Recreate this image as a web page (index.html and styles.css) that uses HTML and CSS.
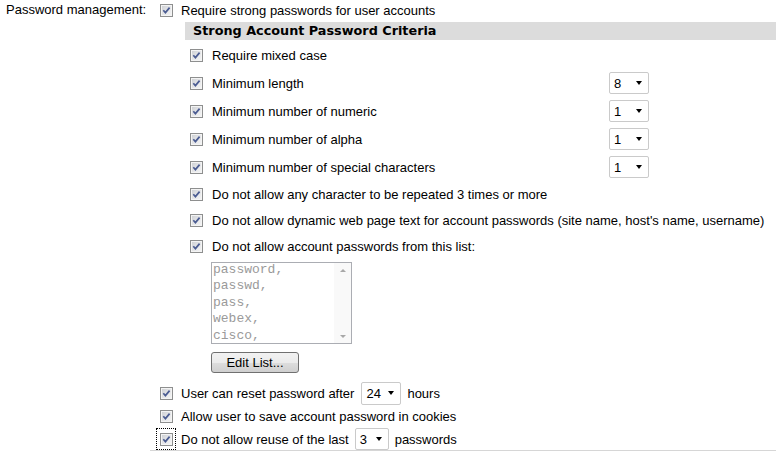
FILE: index.html
```html
<!DOCTYPE html>
<html>
<head>
<meta charset="utf-8">
<link rel="stylesheet" href="styles.css">
</head>
<body>
<div class="page">
  <div class="label">Password management:</div>
  <div class="content">
    <div class="row top">
      <span class="cb"><svg viewBox="0 0 11 11" width="11" height="11"><path d="M2.3 5.3 L4.4 7.6 L8.6 2.6" /></svg></span>
      <span>Require strong passwords for user accounts</span>
    </div>
    <div class="criteria">
      <div class="crit-head">Strong Account Password Criteria</div>
      <div class="crit-row tall">
        <span class="cb"><svg viewBox="0 0 11 11" width="11" height="11"><path d="M2.3 5.3 L4.4 7.6 L8.6 2.6" /></svg></span>
        <span>Require mixed case</span>
      </div>
      <div class="crit-row tall">
        <span class="cb"><svg viewBox="0 0 11 11" width="11" height="11"><path d="M2.3 5.3 L4.4 7.6 L8.6 2.6" /></svg></span>
        <span class="crit-label">Minimum length</span>
        <span class="sel">8</span>
      </div>
      <div class="crit-row tall">
        <span class="cb"><svg viewBox="0 0 11 11" width="11" height="11"><path d="M2.3 5.3 L4.4 7.6 L8.6 2.6" /></svg></span>
        <span class="crit-label">Minimum number of numeric</span>
        <span class="sel">1</span>
      </div>
      <div class="crit-row tall">
        <span class="cb"><svg viewBox="0 0 11 11" width="11" height="11"><path d="M2.3 5.3 L4.4 7.6 L8.6 2.6" /></svg></span>
        <span class="crit-label">Minimum number of alpha</span>
        <span class="sel">1</span>
      </div>
      <div class="crit-row tall">
        <span class="cb"><svg viewBox="0 0 11 11" width="11" height="11"><path d="M2.3 5.3 L4.4 7.6 L8.6 2.6" /></svg></span>
        <span class="crit-label">Minimum number of special characters</span>
        <span class="sel">1</span>
      </div>
      <div class="crit-row">
        <span class="cb"><svg viewBox="0 0 11 11" width="11" height="11"><path d="M2.3 5.3 L4.4 7.6 L8.6 2.6" /></svg></span>
        <span>Do not allow any character to be repeated 3 times or more</span>
      </div>
      <div class="crit-row">
        <span class="cb"><svg viewBox="0 0 11 11" width="11" height="11"><path d="M2.3 5.3 L4.4 7.6 L8.6 2.6" /></svg></span>
        <span>Do not allow dynamic web page text for account passwords (site name, host's name, username)</span>
      </div>
      <div class="crit-row">
        <span class="cb"><svg viewBox="0 0 11 11" width="11" height="11"><path d="M2.3 5.3 L4.4 7.6 L8.6 2.6" /></svg></span>
        <span>Do not allow account passwords from this list:</span>
      </div>
      <div class="list-block">
        <div class="listbox">
          <div class="list-text">password,<br>passwd,<br>pass,<br>webex,<br>cisco,</div>
          <div class="scroll"><span class="arr up"></span><span class="arr down"></span></div>
        </div>
        <button class="btn">Edit List...</button>
      </div>
    </div>
    <div class="row bottom first">
      <span class="cb"><svg viewBox="0 0 11 11" width="11" height="11"><path d="M2.3 5.3 L4.4 7.6 L8.6 2.6" /></svg></span>
      <span>User can reset password after</span>
      <span class="sel wide">24</span>
      <span>hours</span>
    </div>
    <div class="row bottom">
      <span class="cb"><svg viewBox="0 0 11 11" width="11" height="11"><path d="M2.3 5.3 L4.4 7.6 L8.6 2.6" /></svg></span>
      <span>Allow user to save account password in cookies</span>
    </div>
    <div class="row bottom last">
      <span class="focus"><span class="cb"><svg viewBox="0 0 11 11" width="11" height="11"><path d="M2.3 5.3 L4.4 7.6 L8.6 2.6" /></svg></span></span>
      <span>Do not allow reuse of the last</span>
      <span class="sel narrow">3</span>
      <span>passwords</span>
    </div>
  </div>
</div>
</body>
</html>
```
FILE: styles.css
```css
html, body {
  margin: 0;
  padding: 0;
  background: #fff;
}
body {
  font-family: "Liberation Sans", Arial, sans-serif;
  font-size: 13px;
  color: #000;
}
.page {
  display: grid;
  grid-template-columns: 150px 1fr;
  width: 776px;
}
.label {
  padding-left: 6px;
  line-height: 20px;
  height: 20px;
}
.content {
  padding-left: 10px;
  border-bottom: 1px solid #d6d6d6;
}
.row {
  display: flex;
  align-items: center;
  gap: 8px;
  white-space: nowrap;
}
.row.top {
  height: 20px;
  margin-bottom: 2px;
}
.cb {
  box-sizing: border-box;
  width: 13px;
  height: 13px;
  flex: none;
  border: 1px solid #8e8f8f;
  background: linear-gradient(135deg, #cbcdd1 0%, #e6e7e9 55%, #f6f6f6 100%);
  box-shadow: inset 0 0 0 1px #f4f4f4;
  display: flex;
}
.cb svg {
  display: block;
}
.cb path {
  fill: none;
  stroke: #4b5c92;
  stroke-width: 1.7;
}
.criteria {
  margin-left: 25px;
}
.crit-head {
  height: 18px;
  line-height: 18px;
  background: #dcdcdc;
  padding-left: 8px;
  font-family: "DejaVu Sans", Verdana, sans-serif;
  font-weight: bold;
  font-size: 12.8px;
  margin-bottom: 1px;
}
.crit-row {
  display: flex;
  align-items: center;
  gap: 9px;
  padding-left: 5px;
  height: 26px;
  white-space: nowrap;
}
.crit-row.tall {
  height: 28px;
}
.crit-label {
  width: 388px;
}
.sel {
  box-sizing: border-box;
  position: relative;
  display: inline-flex;
  align-items: center;
  width: 40px;
  height: 22px;
  padding-left: 4px;
  border: 1px solid #cacaca;
  border-radius: 2px;
  background: #fff;
  flex: none;
}
.sel::after {
  content: "";
  position: absolute;
  right: 6px;
  top: 8px;
  border-left: 3.5px solid transparent;
  border-right: 3.5px solid transparent;
  border-top: 4px solid #000;
}
.sel.wide {
  height: 23px;
  margin-left: -1px;
  margin-right: -2px;
}
.sel.narrow {
  width: 34px;
  margin-left: -2px;
  margin-right: -2px;
}
.list-block {
  padding-left: 26px;
  padding-top: 3px;
}
.listbox {
  box-sizing: border-box;
  width: 141px;
  height: 82px;
  border: 1px solid #abadb3;
  display: flex;
  background: #fff;
  overflow: hidden;
}
.list-text {
  flex: 1;
  padding: 0 1px;
  margin-top: -1px;
  font-family: "Liberation Mono", "Courier New", monospace;
  font-size: 13px;
  line-height: 16.4px;
  color: #9a9a9a;
}
.scroll {
  width: 17px;
  background: #f9f9f9;
  display: flex;
  flex-direction: column;
  justify-content: space-between;
  align-items: center;
  padding: 6px 0 5px;
}
.arr {
  width: 0;
  height: 0;
  border-left: 3px solid transparent;
  border-right: 3px solid transparent;
}
.arr.up {
  border-bottom: 3px solid #a8a8a8;
}
.arr.down {
  border-top: 3px solid #a8a8a8;
}
.btn {
  display: block;
  margin-top: 8px;
  width: 88px;
  height: 21px;
  padding: 0;
  border: 1px solid #707070;
  border-radius: 3px;
  background: linear-gradient(#f2f2f2 0%, #ebebeb 50%, #dddddd 51%, #cfcfcf 100%);
  font-family: "Liberation Sans", Arial, sans-serif;
  font-size: 13px;
  color: #000;
}
.row.bottom {
  height: 23px;
}
.row.bottom.first {
  margin-top: 9px;
}
.row.bottom.last {
  height: 22px;
}
.focus {
  box-sizing: border-box;
  display: flex;
  align-items: center;
  height: 22px;
  margin-left: -4px;
  padding: 0 2px 0 3px;
  border: 1px dotted #000;
  margin-right: -3px;
}
```
